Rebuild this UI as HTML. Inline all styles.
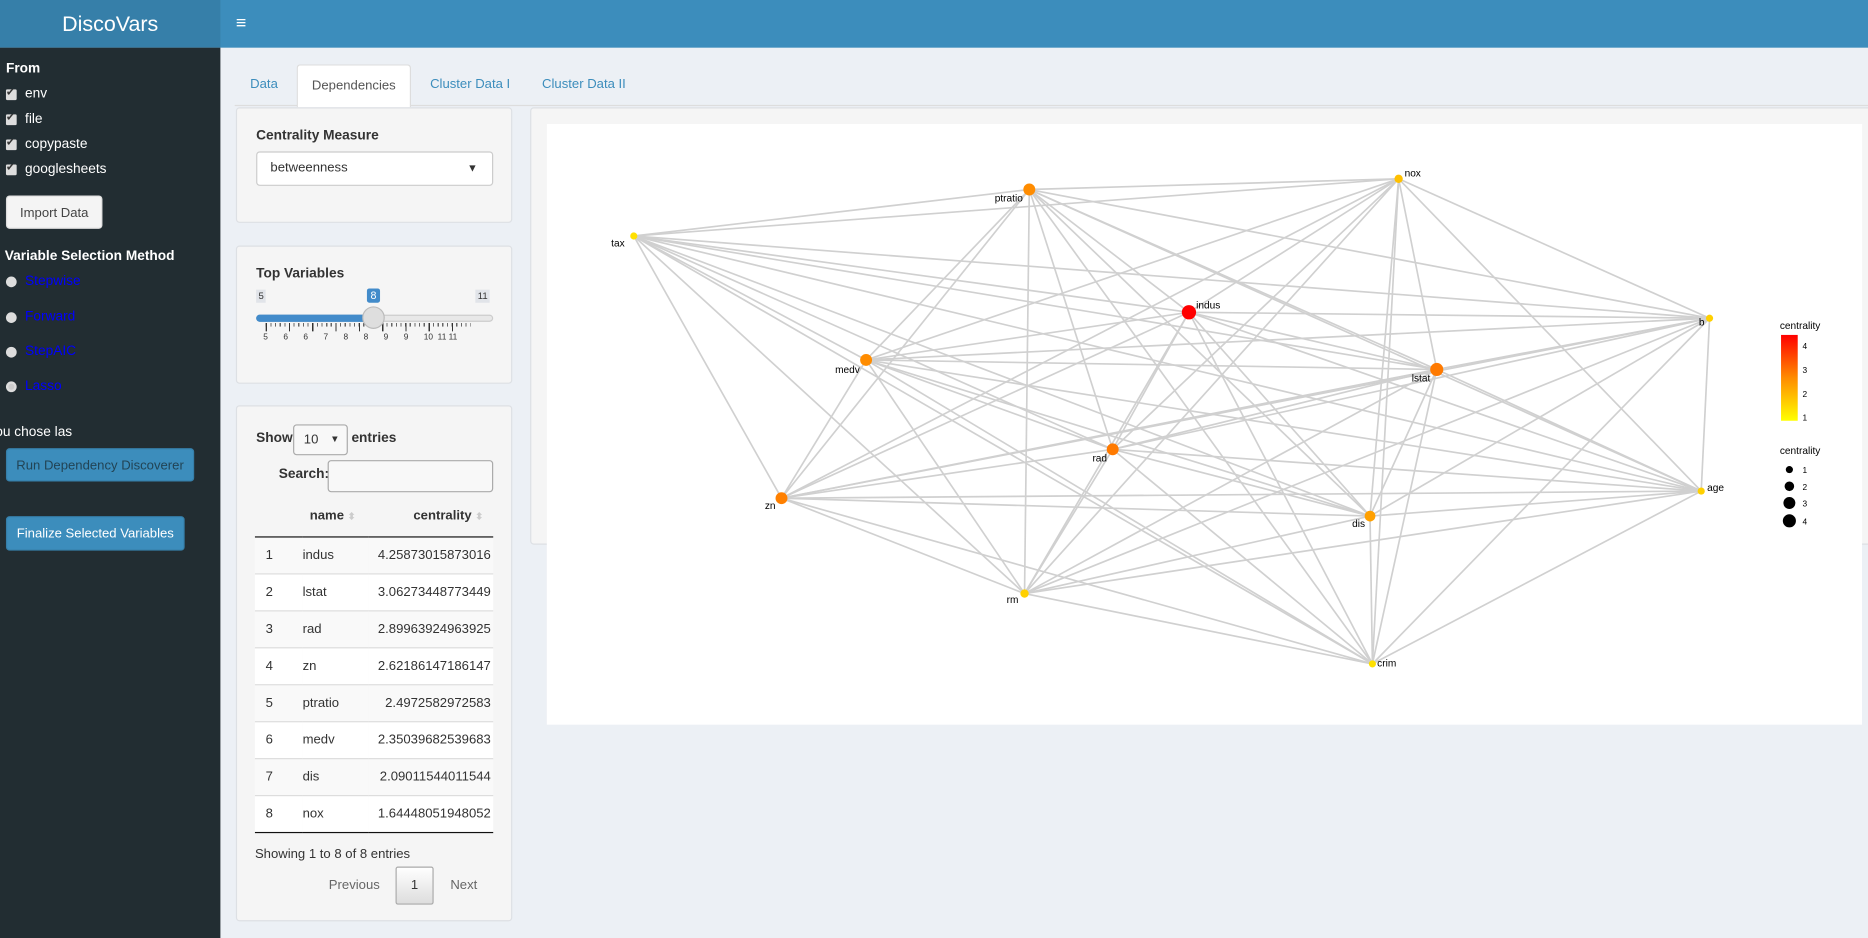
<!DOCTYPE html>
<html><head><meta charset="utf-8">
<style>
*{box-sizing:border-box;margin:0;padding:0}
html,body{width:1868px;height:938px;overflow:hidden;background:#ecf0f5;font-family:"Liberation Sans",Arial,sans-serif}
#w{width:1568px;height:787px;transform:scale(1.19133,1.1919);transform-origin:0 0;position:relative}
.abs{position:absolute}
.hdr{left:0;top:0;width:1568px;height:40px;background:#3c8dbc}
.logo{left:0;top:0;width:185px;height:40px;background:#367fa9;color:#fff;font-size:18px;text-align:center;line-height:40px}
.side{left:0;top:40px;width:185px;height:747px;background:#222d32;color:#fff;font-size:11.5px}
.cb{position:absolute;left:5px;width:9px;height:9px;background:#ddd;border-radius:1px}
.cb:after{content:"✔";position:absolute;left:0;top:-3px;font-size:9px;color:#333}
.lbl{position:absolute;left:21px}
.rad{position:absolute;left:5px;width:9px;height:9px;border-radius:50%;background:#ddd}
.blue{color:#00f;position:absolute;left:21px}
.btn{position:absolute;border-radius:3px;font-size:11px;text-align:center}
.box{background:#f5f5f5;border:1px solid #dde0e4;border-radius:3px}
.tab{position:absolute;top:54px;height:35px;line-height:35px;font-size:11px;color:#3c8dbc}
table{border-collapse:collapse;font-size:11px;color:#333}
td{height:31px;border-top:1px solid #ddd}
</style></head><body><div id="w">
<div class="abs hdr"></div>
<div class="abs logo">DiscoVars</div>
<div class="abs" style="left:198px;top:11px;color:#fff;font-size:15px;font-weight:bold">≡</div>
<div class="abs side">
 <div style="position:absolute;left:5px;top:12px;font-weight:bold">From</div>
 <div class="cb" style="top:35px"></div><div class="lbl" style="top:33px">env</div>
 <div class="cb" style="top:56px"></div><div class="lbl" style="top:54px">file</div>
 <div class="cb" style="top:77px"></div><div class="lbl" style="top:75px">copypaste</div>
 <div class="cb" style="top:98px"></div><div class="lbl" style="top:96px">googlesheets</div>
 <div class="btn" style="left:5px;top:124px;width:81px;height:28px;line-height:28px;background:#f4f4f4;color:#444;border:1px solid #ddd">Import Data</div>
 <div style="position:absolute;left:4px;top:169px;font-weight:bold">Variable Selection Method</div>
 <div class="rad" style="top:192px"></div><div class="blue" style="top:190px">Stepwise</div>
 <div class="rad" style="top:222px"></div><div class="blue" style="top:220px">Forward</div>
 <div class="rad" style="top:251px"></div><div class="blue" style="top:249px">StepAIC</div>
 <div class="rad" style="top:280px;background:#ccc;border:2px solid #ddd"></div><div class="blue" style="top:278px">Lasso</div>
 <div style="position:absolute;left:-4px;top:317px">ou chose las</div>
 <div class="btn" style="left:5px;top:336px;width:158px;height:28px;line-height:28px;background:#3c8dbc;color:#245;border:1px solid #367fa9">Run Dependency Discoverer</div>
 <div class="btn" style="left:5px;top:393px;width:150px;height:29px;line-height:29px;background:#3c8dbc;color:#fff;border:1px solid #367fa9">Finalize Selected Variables</div>
</div>
<div class="abs" style="left:197px;top:88px;width:1371px;height:1px;background:#ddd"></div>
<div class="tab" style="left:210px">Data</div>
<div class="tab" style="left:249px;width:96px;background:#fff;border:1px solid #ddd;border-bottom:none;color:#555;text-align:center;border-radius:3px 3px 0 0;height:36px">Dependencies</div>
<div class="tab" style="left:361px">Cluster Data I</div>
<div class="tab" style="left:455px">Cluster Data II</div>

<div class="abs box" style="left:198px;top:90px;width:232px;height:97px">
 <div style="position:absolute;left:16px;top:17px;font-size:11.5px;font-weight:bold;color:#333">Centrality Measure</div>
 <div style="position:absolute;left:16px;top:36px;width:199px;height:29px;background:#fff;border:1px solid #ccc;border-radius:3px;font-size:11px;color:#333;line-height:27px;padding-left:11px">betweenness<span style="position:absolute;right:12px;top:0;font-size:9px">▼</span></div>
</div>
<div class="abs box" style="left:198px;top:206px;width:232px;height:116px">
 <div style="position:absolute;left:16px;top:17px;font-size:11.5px;font-weight:bold;color:#333">Top Variables</div>
 <div style="position:absolute;left:16px;top:36px;font-size:8px;background:#e1e4e9;padding:1px 2px;color:#333">5</div>
 <div style="position:absolute;left:109px;top:35px;font-size:9px;background:#428bca;padding:1px 3px;color:#fff;border-radius:2px">8</div>
 <div style="position:absolute;left:200px;top:36px;font-size:8px;background:#e1e4e9;padding:1px 2px;color:#333">11</div>
 <div style="position:absolute;left:16px;top:57px;width:199px;height:6px;background:#e8e8e8;border-radius:3px;border:1px solid #ccc"></div>
 <div style="position:absolute;left:16px;top:57px;width:100px;height:6px;background:#428bca;border-radius:3px"></div>
 <div style="position:absolute;left:24px;top:64px;width:172px;height:3px;background:repeating-linear-gradient(90deg,#666 0 1px,transparent 1px 3.9px)"></div>
 <div style="position:absolute;left:24px;top:64px;width:172px;height:7px;background:repeating-linear-gradient(90deg,#333 0 1px,transparent 1px 19.55px)"></div>
 <div style="position:absolute;left:105px;top:50px;width:19px;height:19px;border-radius:50%;background:#dedede;border:1px solid #bbb"></div>
 <div style="position:absolute;left:22px;top:73px;font-size:7px;color:#333;word-spacing:11px;white-space:nowrap">5 6 6 7 8 8 9 9 10<span style="word-spacing:0">&nbsp; 11 11</span></div>
</div>
<div class="abs box" style="left:198px;top:340px;width:232px;height:433px">
 <div style="position:absolute;left:16px;top:21px;font-size:11.5px;font-weight:bold;color:#333">Show</div>
 <div style="position:absolute;left:47px;top:15px;width:46px;height:26px;border:1px solid #aaa;border-radius:3px;background:#f8f8f8;font-size:11px;line-height:24px;padding-left:8px;color:#333">10<span style="position:absolute;right:6px;font-size:8px">▼</span></div>
 <div style="position:absolute;left:96px;top:21px;font-size:11.5px;font-weight:bold;color:#333">entries</div>
 <div style="position:absolute;left:35px;top:51px;font-size:11.5px;font-weight:bold;color:#333">Search:</div>
 <div style="position:absolute;left:76px;top:45px;width:139px;height:27px;border:1px solid #aaa;border-radius:3px;background:#f8f8f8"></div>
 <div style="position:absolute;left:61px;top:86px;font-size:11px;font-weight:bold;color:#333">name <span style="color:#ccc;font-size:8px">⬍</span></div>
 <div style="position:absolute;left:148px;top:86px;font-size:11px;font-weight:bold;color:#333">centrality <span style="color:#ccc;font-size:8px">⬍</span></div>
 <table style="position:absolute;left:15px;top:109px;width:200px;border-top:1px solid #111;border-bottom:1px solid #111;table-layout:fixed">
 <colgroup><col style="width:40px"><col style="width:55px"><col></colgroup>
 <tr style="background:#f9f9f9"><td style="padding-left:9px;border-top:none">1</td><td style="border-top:none">indus</td><td style="text-align:right;padding-right:2px;border-top:none">4.25873015873016</td></tr>
 <tr style="background:#fff"><td style="padding-left:9px">2</td><td>lstat</td><td style="text-align:right;padding-right:2px">3.06273448773449</td></tr>
 <tr style="background:#f9f9f9"><td style="padding-left:9px">3</td><td>rad</td><td style="text-align:right;padding-right:2px">2.89963924963925</td></tr>
 <tr style="background:#fff"><td style="padding-left:9px">4</td><td>zn</td><td style="text-align:right;padding-right:2px">2.62186147186147</td></tr>
 <tr style="background:#f9f9f9"><td style="padding-left:9px">5</td><td>ptratio</td><td style="text-align:right;padding-right:2px">2.4972582972583</td></tr>
 <tr style="background:#fff"><td style="padding-left:9px">6</td><td>medv</td><td style="text-align:right;padding-right:2px">2.35039682539683</td></tr>
 <tr style="background:#f9f9f9"><td style="padding-left:9px">7</td><td>dis</td><td style="text-align:right;padding-right:2px">2.09011544011544</td></tr>
 <tr style="background:#fff"><td style="padding-left:9px">8</td><td>nox</td><td style="text-align:right;padding-right:2px">1.64448051948052</td></tr>
 </table>
 <div style="position:absolute;left:15px;top:370px;font-size:11px;color:#333">Showing 1 to 8 of 8 entries</div>
 <div style="position:absolute;left:77px;top:396px;font-size:11px;color:#666">Previous</div>
 <div style="position:absolute;left:133px;top:386px;width:32px;height:32px;border:1px solid #aaa;border-radius:2px;background:linear-gradient(#fff,#ddd);font-size:11px;text-align:center;line-height:30px;color:#333">1</div>
 <div style="position:absolute;left:179px;top:396px;font-size:11px;color:#666">Next</div>
</div>
<div class="abs box" style="left:445px;top:90px;width:1130px;height:367px"></div>
<div class="abs" style="left:459px;top:104px;width:1104px;height:504px;background:#fff"></div>
<svg class="abs" style="left:0;top:0" width="1568" height="787" id="g" font-family="Liberation Sans,Arial,sans-serif" font-size="8.5"></svg>
<div class="abs" style="left:1494px;top:268px;font-size:8.5px">centrality</div>
<div class="abs" style="left:1495px;top:281px;width:14px;height:72px;background:linear-gradient(#f00,#ff8c00 50%,#ff0)"></div>
<div class="abs" style="left:1513px;top:282px;font-size:7px;line-height:20px">4<br>3<br>2<br>1</div>
<div class="abs" style="left:1494px;top:373px;font-size:8.5px">centrality</div>
<svg class="abs" style="left:1490px;top:385px" width="40" height="60" font-size="7" font-family="Liberation Sans,Arial">
<circle cx="12" cy="9" r="3"/><circle cx="12" cy="23" r="4"/><circle cx="12" cy="37" r="5"/><circle cx="12" cy="52" r="5.5"/>
<text x="23" y="12">1</text><text x="23" y="26">2</text><text x="23" y="40">3</text><text x="23" y="55">4</text></svg>
</div>
<script>
var N=[["ptratio",864,159,"#ff8c00",5,-29,10],["nox",1174,150,"#ffc000",3.5,5,-2],["tax",532,198,"#ffe000",3,-19,9],["indus",998,262,"#f00",6,6,-3],["b",1435,267,"#ffd000",3,-9,6],["medv",727,302,"#ff8c00",5,-26,11],["lstat",1206,310,"#ff7a00",5.5,-21,10],["rad",934,377,"#ff7a00",5,-17,10],["zn",656,418,"#ff8000",5,-14,9],["age",1428,412,"#ffd000",3,5,0],["dis",1150,433,"#ffa000",4.5,-15,9],["rm",860,498,"#ffd000",3.5,-15,8],["crim",1152,557,"#ffe000",3,4,2]];
var s="";
for(var i=0;i<N.length;i++)for(var j=i+1;j<N.length;j++){s+='<line x1="'+N[i][1]+'" y1="'+N[i][2]+'" x2="'+N[j][1]+'" y2="'+N[j][2]+'" stroke="#d0d0d0" stroke-width="1.4"/>';}
N.forEach(function(n){s+='<circle cx="'+n[1]+'" cy="'+n[2]+'" r="'+n[4]+'" fill="'+n[3]+'"/><text x="'+(n[1]+n[5])+'" y="'+(n[2]+n[6])+'">'+n[0]+'</text>';});
document.getElementById("g").innerHTML=s;
</script>
</body></html>
